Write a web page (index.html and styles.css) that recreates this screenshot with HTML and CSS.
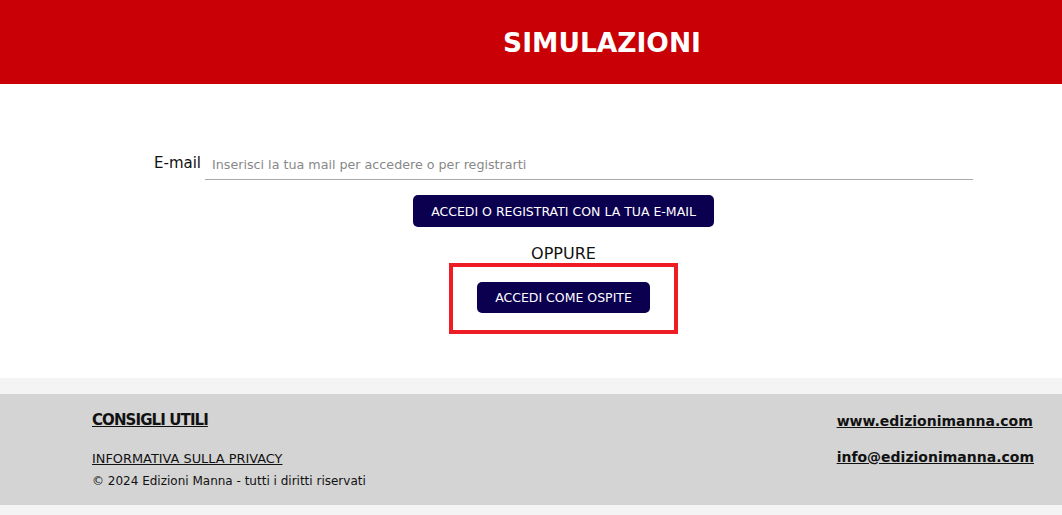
FILE: index.html
```html
<!DOCTYPE html>
<html lang="it">
<head>
    <meta charset="UTF-8">
    <meta name="viewport" content="width=device-width, initial-scale=1.0">
    <title>Simulazioni - Edizioni Manna</title>
    <link rel="stylesheet" href="styles.css">
</head>
<body>
    <header class="header">
        <h1 class="title">SIMULAZIONI</h1>
    </header>

    <main class="login">
        <div class="email-row">
            <label class="email-label" for="email">E-mail</label>
            <input class="email-input" id="email" type="email" placeholder="Inserisci la tua mail per accedere o per registrarti">
        </div>
        <button class="button">ACCEDI O REGISTRATI CON LA TUA E-MAIL</button>
        <p class="or">OPPURE</p>
        <div class="guest-box">
            <button class="button">ACCEDI COME OSPITE</button>
        </div>
    </main>

    <div class="spacer"></div>
    <footer class="footer">
        <div class="footer-left">
            <a class="footer-title" href="#">CONSIGLI UTILI</a>
            <a class="footer-link" href="#">INFORMATIVA SULLA PRIVACY</a>
            <p class="copy">© 2024 Edizioni Manna - tutti i diritti riservati</p>
        </div>
        <div class="footer-right">
            <a href="#">www.edizionimanna.com</a>
            <a href="#">info@edizionimanna.com</a>
        </div>
    </footer>
    <div class="spacer bottom"></div>
</body>
</html>
```

FILE: styles.css
```css
body {
    margin: 0;
    font-family: "DejaVu Sans", sans-serif;
    color: #111;
    background-color: #fff;
}
.header {
    background-color: #c90005;
    height: 84px;
    padding-left: 142px;
    display: flex;
    align-items: center;
    justify-content: center;
}
.title {
    margin: 0;
    color: #fff;
    font-size: 26.5px;
    font-weight: bold;
}
.login {
    height: 294px;
    box-sizing: border-box;
    padding: 67px 89px 0 154px;
    display: flex;
    flex-direction: column;
    align-items: center;
}
.email-row {
    display: flex;
    align-items: flex-end;
    align-self: stretch;
    gap: 4px;
}
.email-label {
    font-size: 15px;
    padding-bottom: 8px;
}
.email-input {
    flex: 1;
    border: none;
    border-bottom: 1px solid #aaa;
    padding: 6px 7px 7px;
    font-family: inherit;
    font-size: 12.7px;
    outline: none;
}
.email-input::placeholder {
    color: #888;
}
.button {
    margin-top: 15px;
    padding: 0 18px;
    height: 32px;
    background-color: #0b0050;
    color: #fff;
    border: none;
    border-radius: 5px;
    font-family: inherit;
    font-size: 12.5px;
    cursor: pointer;
}
.or {
    margin: 17px 0 0;
    font-size: 16px;
    line-height: 19px;
}
.guest-box {
    margin-top: 0;
    border: 4px solid #ee1c25;
    padding: 15px 24px 17px;
}
.guest-box .button {
    margin-top: 0;
    height: 31px;
}
.spacer {
    height: 16px;
    background-color: #f4f4f4;
}
.spacer.bottom {
    height: 10px;
}
.footer {
    height: 111px;
    box-sizing: border-box;
    background-color: #d4d4d4;
    padding: 17px 28px 0 92px;
    display: flex;
    justify-content: space-between;
}
.footer a {
    color: #111;
}
.footer-left {
    display: flex;
    flex-direction: column;
    align-items: flex-start;
}
.footer-title {
    font-size: 15px;
    font-weight: bold;
    letter-spacing: -0.9px;
}
.footer-link {
    margin-top: 22px;
    font-size: 12.9px;
}
.copy {
    margin: 8px 0 0;
    font-size: 12px;
}
.footer-right {
    display: flex;
    flex-direction: column;
    align-items: flex-start;
    gap: 20px;
    padding-top: 2px;
}
.footer-right a {
    font-size: 14px;
    font-weight: bold;
}
```
